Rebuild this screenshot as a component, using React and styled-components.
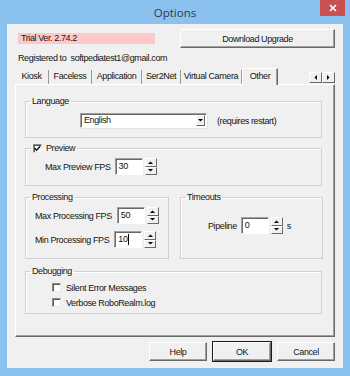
import React from 'react';
import styled, { createGlobalStyle, css } from 'styled-components';

const Global = createGlobalStyle`
  html, body { margin: 0; padding: 0; background: #ffffff; }
  body {
    font-family: "Liberation Sans", Arial, sans-serif;
    font-size: 9px;
    letter-spacing: -0.4px;
    color: #141414;
  }
  *, *::before, *::after { box-sizing: border-box; }
`;

const Window = styled.div`
  width: 350px;
  height: 376px;
  background: #8bc1ef;
  display: flex;
  flex-direction: column;
  padding-bottom: 8px;
`;

const TitleBar = styled.div`
  height: 24px;
  display: grid;
  grid-template-columns: 1fr auto 1fr;
  align-items: start;
`;

const Title = styled.div`
  grid-column: 2;
  font-family: "Open Sans", "Noto Sans", sans-serif;
  font-size: 11.5px;
  letter-spacing: 0;
  line-height: 25px;
  color: #2f3b48;
`;

const CloseBtn = styled.div`
  grid-column: 3;
  justify-self: end;
  width: 25px;
  height: 16px;
  margin-right: 5px;
  background: #c75050;
  display: flex;
  align-items: center;
  justify-content: center;
`;

const Client = styled.div`
  flex: 1;
  margin: 0 7px;
  background: #f0f0f0;
  padding: 5px 8px 0 8px;
  display: flex;
  flex-direction: column;
`;

const TopRow = styled.div`
  display: flex;
  align-items: center;
  height: 19px;
`;

const TrialBadge = styled.div`
  width: 137px;
  height: 11px;
  margin-left: 3px;
  padding-left: 3px;
  background: #ffc8c8;
  line-height: 11px;
  white-space: nowrap;
`;

const Button = styled.div`
  width: ${p => p.$w || 58}px;
  height: 19px;
  margin-left: ${p => (p.$push ? 'auto' : '0')};
  background: #f0f0f0;
  display: flex;
  align-items: center;
  justify-content: center;
  white-space: nowrap;
  border-top: 1px solid #ffffff;
  border-left: 1px solid #ffffff;
  border-right: 1px solid #696969;
  border-bottom: 1px solid #696969;
  box-shadow: inset -1px -1px 0 #a0a0a0;
  ${p => p.$default && css`
    outline: 1px solid #1a1a1a;
    outline-offset: 0;
  `}
`;

const Registered = styled.div`
  margin: 4px 0 0 3px;
  line-height: 13px;
  white-space: nowrap;
`;

const TabStrip = styled.div`
  margin-top: 3px;
  height: 16px;
  display: flex;
  align-items: flex-end;
`;

const Tab = styled.div`
  flex-shrink: 0;
  width: ${p => p.$w}px;
  height: 14px;
  text-align: center;
  line-height: 13px;
  white-space: nowrap;
  border-right: 1px solid #9a9a9a;
  ${p => p.$active && css`
    height: 17px;
    margin-bottom: -1px;
    padding-top: 1px;
    position: relative;
    z-index: 1;
    background: #f0f0f0;
    border-top: 1px solid #ffffff;
    border-left: 1px solid #ffffff;
    border-right: 1px solid #696969;
    box-shadow: inset -1px 0 0 #a0a0a0;
  `}
`;

const ScrollArrows = styled.div`
  flex-shrink: 0;
  margin-left: auto;
  align-self: flex-start;
  margin-top: 4px;
  display: flex;
`;

const ArrowBtn = styled.div`
  width: 13px;
  height: 11px;
  background: #f0f0f0;
  border-top: 1px solid #ffffff;
  border-left: 1px solid #ffffff;
  border-right: 1px solid #696969;
  border-bottom: 1px solid #696969;
  display: flex;
  align-items: center;
  justify-content: center;
`;

const Panel = styled.div`
  height: 253px;
  background: #f0f0f0;
  border-top: 1px solid #ffffff;
  border-left: 1px solid #ffffff;
  border-right: 1px solid #696969;
  border-bottom: 1px solid #696969;
  box-shadow: inset -1px -1px 0 #a0a0a0;
  padding: 10px 12px 0 9px;
  display: flex;
  flex-direction: column;
`;

const Group = styled.fieldset`
  margin: 0 0 ${p => p.$mb || 0}px 0;
  padding: 0;
  min-width: 0;
  height: ${p => p.$h}px;
  border: 1px solid #d0d0d0;
  box-shadow: inset 1px 1px 0 #ffffff;
`;

const Legend = styled.legend`
  margin-left: ${p => p.$ml || 4}px;
  padding: 0 2px;
  line-height: 12px;
  display: flex;
  align-items: center;
  gap: 4px;
  white-space: nowrap;
`;

const GroupBody = styled.div`
  padding: ${p => p.$pt || 0}px 0 0 ${p => p.$pl || 0}px;
  display: flex;
  flex-direction: column;
  gap: ${p => p.$gap || 0}px;
`;

const Row = styled.div`
  display: flex;
  align-items: center;
  white-space: nowrap;
`;

const GroupRow = styled.div`
  display: grid;
  grid-template-columns: 144px 143px;
  column-gap: 11px;
  margin-bottom: 6px;
`;

const Combo = styled.div`
  width: 127px;
  height: 15px;
  background: #ffffff;
  border-top: 1px solid #a0a0a0;
  border-left: 1px solid #a0a0a0;
  border-right: 1px solid #ffffff;
  border-bottom: 1px solid #ffffff;
  box-shadow: inset 1px 1px 0 #696969, 1px 1px 0 #e3e3e3;
  display: flex;
  align-items: center;
  padding-left: 3px;
`;

const ComboText = styled.span`
  flex: 1;
  line-height: 13px;
`;

const ComboArrow = styled.div`
  width: 9px;
  height: 11px;
  margin-right: 1px;
  background: #f0f0f0;
  border-top: 1px solid #ffffff;
  border-left: 1px solid #ffffff;
  border-right: 1px solid #696969;
  border-bottom: 1px solid #696969;
  display: flex;
  align-items: center;
  justify-content: center;
`;

const Note = styled.span`
  margin-left: 10px;
`;

const Label = styled.span`
  margin-right: ${p => p.$mr || 4}px;
`;

const Edit = styled.div`
  width: 28px;
  height: 17px;
  background: #ffffff;
  border-top: 1px solid #a0a0a0;
  border-left: 1px solid #a0a0a0;
  border-right: 1px solid #ffffff;
  border-bottom: 1px solid #ffffff;
  box-shadow: inset 1px 1px 0 #696969;
  padding: 1px 0 0 3px;
  line-height: 12px;
  display: flex;
  align-items: flex-start;
`;

const Caret = styled.span`
  display: inline-block;
  width: 1px;
  height: 11px;
  background: #000000;
  margin-top: 1px;
  margin-left: 0.5px;
`;

const Spinner = styled.div`
  width: 12px;
  height: 17px;
  margin-left: 2px;
  display: flex;
  flex-direction: column;
`;

const SpinHalf = styled.div`
  flex: 1;
  background: #f0f0f0;
  border-top: 1px solid #ffffff;
  border-left: 1px solid #ffffff;
  border-right: 1px solid #696969;
  border-bottom: 1px solid #696969;
  display: flex;
  align-items: center;
  justify-content: center;
`;

const Unit = styled.span`
  margin-left: 4px;
`;

const CheckRow = styled.div`
  display: flex;
  align-items: center;
  height: 13px;
  white-space: nowrap;
  gap: 5px;
`;

const CheckBox = styled.span`
  width: 9px;
  height: 9px;
  background: #ffffff;
  border-top: 1px solid #8a8a8a;
  border-left: 1px solid #8a8a8a;
  border-right: 1px solid #e8e8e8;
  border-bottom: 1px solid #e8e8e8;
  box-shadow: inset 1px 1px 0 #5a5a5a;
  display: inline-flex;
  align-items: center;
  justify-content: center;
`;

const ButtonRow = styled.div`
  margin-top: 5px;
  display: flex;
  justify-content: flex-end;
  gap: 6px;
`;

const Tri = ({ dir }) => {
  const pts = {
    up: '0,3 5,3 2.5,0.5',
    down: '0,0 5,0 2.5,2.5',
    left: '3,0 3,5 0.5,2.5',
    right: '0,0 0,5 2.5,2.5',
  }[dir];
  const horiz = dir === 'left' || dir === 'right';
  return (
    <svg width={horiz ? 3 : 5} height={horiz ? 5 : 3} viewBox={horiz ? '0 0 3 5' : '0 0 5 3'}>
      <polygon points={pts} fill="#000" />
    </svg>
  );
};

const Check = ({ checked }) => (
  <CheckBox>
    {checked && (
      <svg width="7" height="7" viewBox="0 0 7 7">
        <polyline points="0.8,3.2 2.6,5.2 6.2,1.2" fill="none" stroke="#111" strokeWidth="1.4" />
      </svg>
    )}
  </CheckBox>
);

const Spin = () => (
  <Spinner>
    <SpinHalf><Tri dir="up" /></SpinHalf>
    <SpinHalf><Tri dir="down" /></SpinHalf>
  </Spinner>
);

const Field = ({ label, value, caret, mr }) => (
  <Row>
    <Label $mr={mr}>{label}</Label>
    <Edit>{value}{caret && <Caret />}</Edit>
    <Spin />
  </Row>
);

const tabs = [
  { label: 'Kiosk', w: 34 },
  { label: 'Faceless', w: 43 },
  { label: 'Application', w: 50 },
  { label: 'Ser2Net', w: 39 },
  { label: 'Virtual Camera', w: 61 },
];

export default function App() {
  return (
    <>
      <Global />
      <Window>
        <TitleBar>
          <Title>Options</Title>
          <CloseBtn>
            <svg width="8" height="8" viewBox="0 0 8 8">
              <path d="M1 1 L7 7 M7 1 L1 7" stroke="#fff" strokeWidth="1.6" />
            </svg>
          </CloseBtn>
        </TitleBar>
        <Client>
          <TopRow>
            <TrialBadge>Trial Ver. 2.74.2</TrialBadge>
            <Button $w={155} $push>Download Upgrade</Button>
          </TopRow>
          <Registered>Registered to&nbsp; softpediatest1@gmail.com</Registered>
          <TabStrip>
            {tabs.map(t => <Tab key={t.label} $w={t.w}>{t.label}</Tab>)}
            <Tab $active $w={36}>Other</Tab>
            <ScrollArrows>
              <ArrowBtn><Tri dir="left" /></ArrowBtn>
              <ArrowBtn><Tri dir="right" /></ArrowBtn>
            </ScrollArrows>
          </TabStrip>
          <Panel>
            <Group $h={43} $mb={4}>
              <Legend>Language</Legend>
              <GroupBody $pt={6} $pl={54}>
                <Row>
                  <Combo>
                    <ComboText>English</ComboText>
                    <ComboArrow><Tri dir="down" /></ComboArrow>
                  </Combo>
                  <Note>(requires restart)</Note>
                </Row>
              </GroupBody>
            </Group>
            <Group $h={44} $mb={5}>
              <Legend $ml={5}><Check checked />Preview</Legend>
              <GroupBody $pt={4} $pl={19}>
                <Field label="Max Preview FPS" value="30" />
              </GroupBody>
            </Group>
            <GroupRow>
              <Group $h={68}>
                <Legend>Processing</Legend>
                <GroupBody $pt={4} $pl={9} $gap={7}>
                  <Field label="Max Processing FPS" value="50" mr={5} />
                  <Field label="Min Processing FPS" value="10" caret mr={5} />
                </GroupBody>
              </Group>
              <Group $h={68}>
                <Legend>Timeouts</Legend>
                <GroupBody $pt={14} $pl={27}>
                  <Row>
                    <Label>Pipeline</Label>
                    <Edit>0</Edit>
                    <Spin />
                    <Unit>s</Unit>
                  </Row>
                </GroupBody>
              </Group>
            </GroupRow>
            <Group $h={49}>
              <Legend>Debugging</Legend>
              <GroupBody $pt={4} $pl={26} $gap={2}>
                <CheckRow><Check />Silent Error Messages</CheckRow>
                <CheckRow><Check />Verbose RoboRealm.log</CheckRow>
              </GroupBody>
            </Group>
          </Panel>
          <ButtonRow>
            <Button>Help</Button>
            <Button $default>OK</Button>
            <Button>Cancel</Button>
          </ButtonRow>
        </Client>
      </Window>
    </>
  );
}
